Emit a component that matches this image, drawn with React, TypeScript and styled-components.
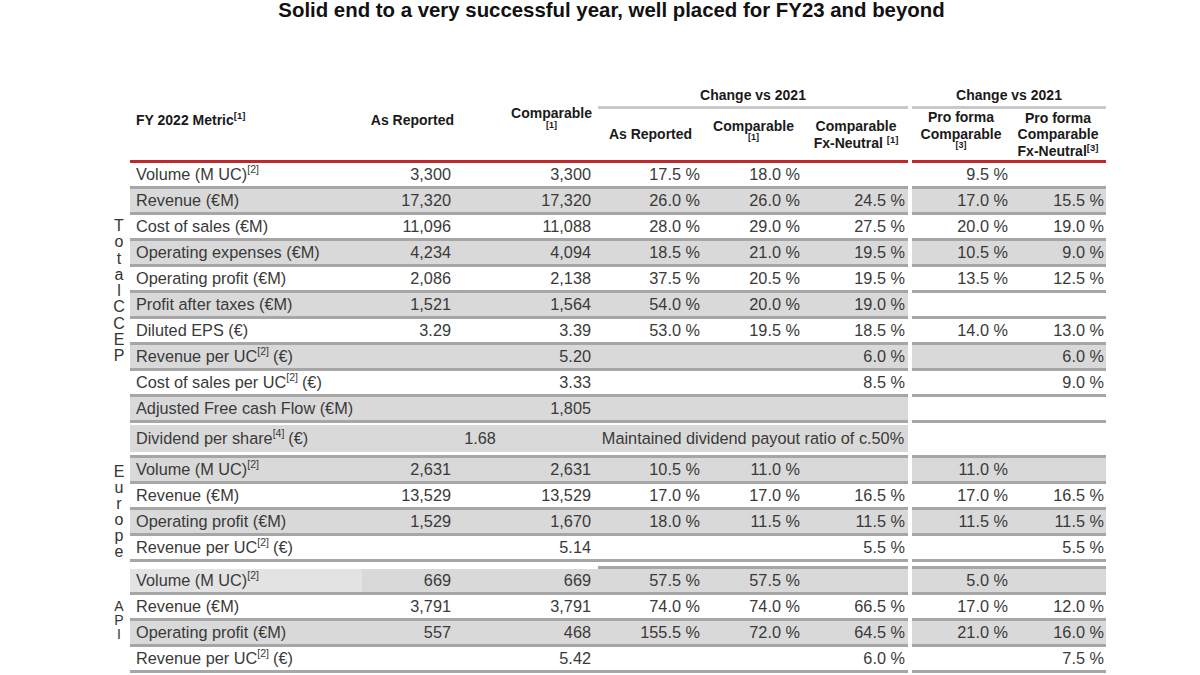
import React, { ReactNode } from 'react';
import styled, { createGlobalStyle } from 'styled-components';

const GlobalStyle = createGlobalStyle`
  html, body {
    margin: 0;
    padding: 0;
    background: #fff;
  }
  body {
    font-family: "Liberation Sans", Arial, sans-serif;
    color: #3a3a3a;
  }
`;

// metric | as reported | comparable | chg AR | chg comp | chg fx | gap | pf comp | pf fx
const COLS = '232px 98px 138px 105px 101px 104px 4px 98px 96px';
const GRAY = '#d9d9d9';
const LINE = '#a6a6a6';
const RED = '#c0272d';

const Page = styled.div`
  width: 1200px;
  height: 675px;
  overflow: hidden;
`;

const Title = styled.h1`
  margin: 0;
  padding-left: 23px;
  font-size: 20.4px;
  line-height: 20px;
  font-weight: bold;
  color: #111;
  text-align: center;
`;

const Table = styled.div`
  margin: 64px 0 0 108px;
  width: 998px;
`;

/* ---------- header ---------- */

const Head = styled.div`
  display: grid;
  grid-template-columns: 22px ${COLS};
  grid-template-rows: 22px 3px 51px 3px;
  font-size: 14px;
  font-weight: bold;
  color: #1a1a1a;
`;

const HeadCell = styled.div<{ $col: string; $row: string; $justify?: string; $pl?: number; $pr?: number; $pb?: number }>`
  grid-column: ${p => p.$col};
  grid-row: ${p => p.$row};
  display: flex;
  align-items: center;
  justify-content: ${p => p.$justify || 'center'};
  padding: 0 ${p => p.$pr || 0}px ${p => p.$pb || 0}px ${p => p.$pl || 0}px;
  text-align: center;
  line-height: 16.5px;
  white-space: nowrap;
`;

const HeadRule = styled.div<{ $col: string; $row: number; $color: string }>`
  grid-column: ${p => p.$col};
  grid-row: ${p => p.$row};
  background: ${p => p.$color};
`;

const Small = styled.div<{ $lh: number; $mb: number }>`
  font-size: 9px;
  line-height: ${p => p.$lh}px;
  margin-bottom: ${p => p.$mb}px;
`;

const HSup = styled.span`
  position: relative;
  top: -5px;
  font-size: 9.5px;
  line-height: 0;
`;

/* ---------- body ---------- */

const Section = styled.div<{ $mt?: number }>`
  display: grid;
  grid-template-columns: 22px 1fr;
  margin-top: ${p => p.$mt || 0}px;
`;

const SideLabel = styled.div<{ $top: number; $lh: number; $fs: number }>`
  padding-top: ${p => p.$top}px;
  display: flex;
  flex-direction: column;
  align-items: center;
  font-size: ${p => p.$fs}px;
  line-height: ${p => p.$lh}px;
  color: #333;
`;

const Rows = styled.div`
  display: flex;
  flex-direction: column;
`;

const Row = styled.div`
  display: grid;
  grid-template-columns: ${COLS};
`;

const Cell = styled.div<{ $bg: string; $top?: string; $justify?: string; $pl?: number; $pr?: number }>`
  box-sizing: border-box;
  height: ${p => (p.$top ? 29 : 26)}px;
  background: ${p => p.$bg};
  border-top: ${p => (p.$top ? `3px solid ${p.$top}` : 'none')};
  border-bottom: 3px solid ${LINE};
  display: flex;
  align-items: center;
  justify-content: ${p => p.$justify || 'flex-end'};
  padding: 0 ${p => p.$pr || 0}px 0 ${p => p.$pl || 0}px;
  font-size: 16.3px;
  white-space: nowrap;
`;

const Gap = styled.div`
  background: #fff;
`;

const Divi = styled.div<{ $bg: string; $span?: number; $justify?: string; $pl?: number }>`
  box-sizing: border-box;
  grid-column: span ${p => p.$span || 1};
  height: 32px;
  background: ${p => p.$bg};
  border-top: 2px solid #fff;
  border-bottom: 3px solid #fff;
  display: flex;
  align-items: center;
  justify-content: ${p => p.$justify || 'center'};
  padding-left: ${p => p.$pl || 0}px;
  font-size: 16.3px;
  white-space: nowrap;
`;

const Sup = styled.span`
  position: relative;
  top: -6px;
  font-size: 10.5px;
  line-height: 0;
  margin-right: 4px;
`;

type RowData = {
  label: ReactNode;
  v: string[]; // ar, cp, c1, c2, c3, p1, p2
  main: boolean;
  pf: boolean;
  top?: boolean;
  apiTop?: boolean;
  metricBg?: string;
};

const perUC = (
  <>
    Revenue per UC<Sup>[2]</Sup>(€)
  </>
);
const vol = (
  <>
    Volume (M UC)<Sup>[2]</Sup>
  </>
);

const total: RowData[] = [
  { label: vol, v: ['3,300', '3,300', '17.5 %', '18.0 %', '', '9.5 %', ''], main: false, pf: false },
  { label: 'Revenue (€M)', v: ['17,320', '17,320', '26.0 %', '26.0 %', '24.5 %', '17.0 %', '15.5 %'], main: true, pf: true },
  { label: 'Cost of sales (€M)', v: ['11,096', '11,088', '28.0 %', '29.0 %', '27.5 %', '20.0 %', '19.0 %'], main: false, pf: false },
  { label: 'Operating expenses (€M)', v: ['4,234', '4,094', '18.5 %', '21.0 %', '19.5 %', '10.5 %', '9.0 %'], main: true, pf: true },
  { label: 'Operating profit (€M)', v: ['2,086', '2,138', '37.5 %', '20.5 %', '19.5 %', '13.5 %', '12.5 %'], main: false, pf: false },
  { label: 'Profit after taxes (€M)', v: ['1,521', '1,564', '54.0 %', '20.0 %', '19.0 %', '', ''], main: true, pf: false },
  { label: 'Diluted EPS (€)', v: ['3.29', '3.39', '53.0 %', '19.5 %', '18.5 %', '14.0 %', '13.0 %'], main: false, pf: false },
  { label: perUC, v: ['', '5.20', '', '', '6.0 %', '', '6.0 %'], main: true, pf: true },
  {
    label: (
      <>
        Cost of sales per UC<Sup>[2]</Sup>(€)
      </>
    ),
    v: ['', '3.33', '', '', '8.5 %', '', '9.0 %'],
    main: false,
    pf: false,
  },
  { label: 'Adjusted Free cash Flow (€M)', v: ['', '1,805', '', '', '', '', ''], main: true, pf: false },
];

const europe: RowData[] = [
  { label: vol, v: ['2,631', '2,631', '10.5 %', '11.0 %', '', '11.0 %', ''], main: true, pf: true, top: true },
  { label: 'Revenue (€M)', v: ['13,529', '13,529', '17.0 %', '17.0 %', '16.5 %', '17.0 %', '16.5 %'], main: false, pf: false },
  { label: 'Operating profit (€M)', v: ['1,529', '1,670', '18.0 %', '11.5 %', '11.5 %', '11.5 %', '11.5 %'], main: true, pf: true },
  { label: perUC, v: ['', '5.14', '', '', '5.5 %', '', '5.5 %'], main: false, pf: false },
];

const api: RowData[] = [
  { label: vol, v: ['669', '669', '57.5 %', '57.5 %', '', '5.0 %', ''], main: true, pf: true, apiTop: true, metricBg: '#e3e3e3' },
  { label: 'Revenue (€M)', v: ['3,791', '3,791', '74.0 %', '74.0 %', '66.5 %', '17.0 %', '12.0 %'], main: false, pf: false },
  { label: 'Operating profit (€M)', v: ['557', '468', '155.5 %', '72.0 %', '64.5 %', '21.0 %', '16.0 %'], main: true, pf: true },
  { label: perUC, v: ['', '5.42', '', '', '6.0 %', '', '7.5 %'], main: false, pf: false },
];

const pads = [9, 7, 3, 4, 3, 2, 2];

function DataRow({ r }: { r: RowData }) {
  const mainBg = r.main ? GRAY : '#fff';
  const pfBg = r.pf ? GRAY : '#fff';
  const topFor = (i: number) => {
    if (r.top) return LINE;
    if (r.apiTop) return i >= 2 ? LINE : '#fff';
    return undefined;
  };
  return (
    <Row>
      <Cell $bg={r.metricBg || mainBg} $justify="flex-start" $pl={6} $top={r.top ? LINE : r.apiTop ? '#fff' : undefined}>
        {r.label}
      </Cell>
      {r.v.slice(0, 5).map((x, i) => (
        <Cell key={i} $bg={mainBg} $pr={pads[i]} $top={topFor(i)}>
          {x}
        </Cell>
      ))}
      <Gap />
      {r.v.slice(5).map((x, i) => (
        <Cell key={i} $bg={pfBg} $pr={pads[5 + i]} $top={topFor(5)}>
          {x}
        </Cell>
      ))}
    </Row>
  );
}

function Letters({ text, top, lh, fs = 16 }: { text: string; top: number; lh: number; fs?: number }) {
  return (
    <SideLabel $top={top} $lh={lh} $fs={fs}>
      {text.split('').map((c, i) => (
        <span key={i}>{c}</span>
      ))}
    </SideLabel>
  );
}

export default function App() {
  return (
    <Page>
      <GlobalStyle />
      <Title>Solid end to a very successful year, well placed for FY23 and beyond</Title>
      <Table>
        <Head>
          <HeadCell $col="2" $row="1 / 4" $justify="flex-start" $pl={6} $pb={3}>
            FY 2022 Metric<HSup>[1]</HSup>
          </HeadCell>
          <HeadCell $col="3" $row="1 / 4" $justify="flex-end" $pr={6} $pb={3}>
            As Reported
          </HeadCell>
          <HeadCell $col="4" $row="1 / 4" $justify="flex-end" $pr={6}>
            <div>
              <div>Comparable</div>
              <Small $lh={9} $mb={9}>
                [1]
              </Small>
            </div>
          </HeadCell>
          <HeadCell $col="5 / 8" $row="1">Change vs 2021</HeadCell>
          <HeadCell $col="9 / 11" $row="1">Change vs 2021</HeadCell>
          <HeadRule $col="5 / 8" $row={2} $color="#c9c9c9" />
          <HeadRule $col="9 / 11" $row={2} $color="#c9c9c9" />
          <HeadCell $col="5" $row="3">As Reported</HeadCell>
          <HeadCell $col="6" $row="3">
            <div>
              <div>Comparable</div>
              <Small $lh={7} $mb={10}>
                [1]
              </Small>
            </div>
          </HeadCell>
          <HeadCell $col="7" $row="3">
            <div>
              <div>Comparable</div>
              <div>
                Fx-Neutral <HSup>[1]</HSup>
              </div>
            </div>
          </HeadCell>
          <HeadCell $col="9" $row="3">
            <div>
              <div>Pro forma</div>
              <div>Comparable</div>
              <Small $lh={7} $mb={11}>
                [3]
              </Small>
            </div>
          </HeadCell>
          <HeadCell $col="10" $row="3">
            <div>
              <div>Pro forma</div>
              <div>Comparable</div>
              <div>
                Fx-Neutral<HSup>[3]</HSup>
              </div>
            </div>
          </HeadCell>
          <HeadRule $col="2 / 8" $row={4} $color={RED} />
          <HeadRule $col="9 / 11" $row={4} $color={RED} />
        </Head>

        <Section>
          <Letters text="TotalCCEP" top={55} lh={16.25} />
          <Rows>
            {total.map((r, i) => (
              <DataRow key={i} r={r} />
            ))}
            <Row>
              <Divi $bg={GRAY} $justify="flex-start" $pl={6}>
                Dividend per share<Sup>[4]</Sup>(€)
              </Divi>
              <Divi $bg={GRAY} $span={2}>
                1.68
              </Divi>
              <Divi $bg={GRAY} $span={3}>
                Maintained dividend payout ratio of c.50%
              </Divi>
              <Gap />
              <Divi $bg="#fff" $span={2} />
            </Row>
          </Rows>
        </Section>

        <Section>
          <Letters text="Europe" top={9} lh={16} />
          <Rows>
            {europe.map((r, i) => (
              <DataRow key={i} r={r} />
            ))}
          </Rows>
        </Section>

        <Section $mt={4}>
          <Letters text="API" top={33} lh={14} fs={14} />
          <Rows>
            {api.map((r, i) => (
              <DataRow key={i} r={r} />
            ))}
          </Rows>
        </Section>
      </Table>
    </Page>
  );
}
